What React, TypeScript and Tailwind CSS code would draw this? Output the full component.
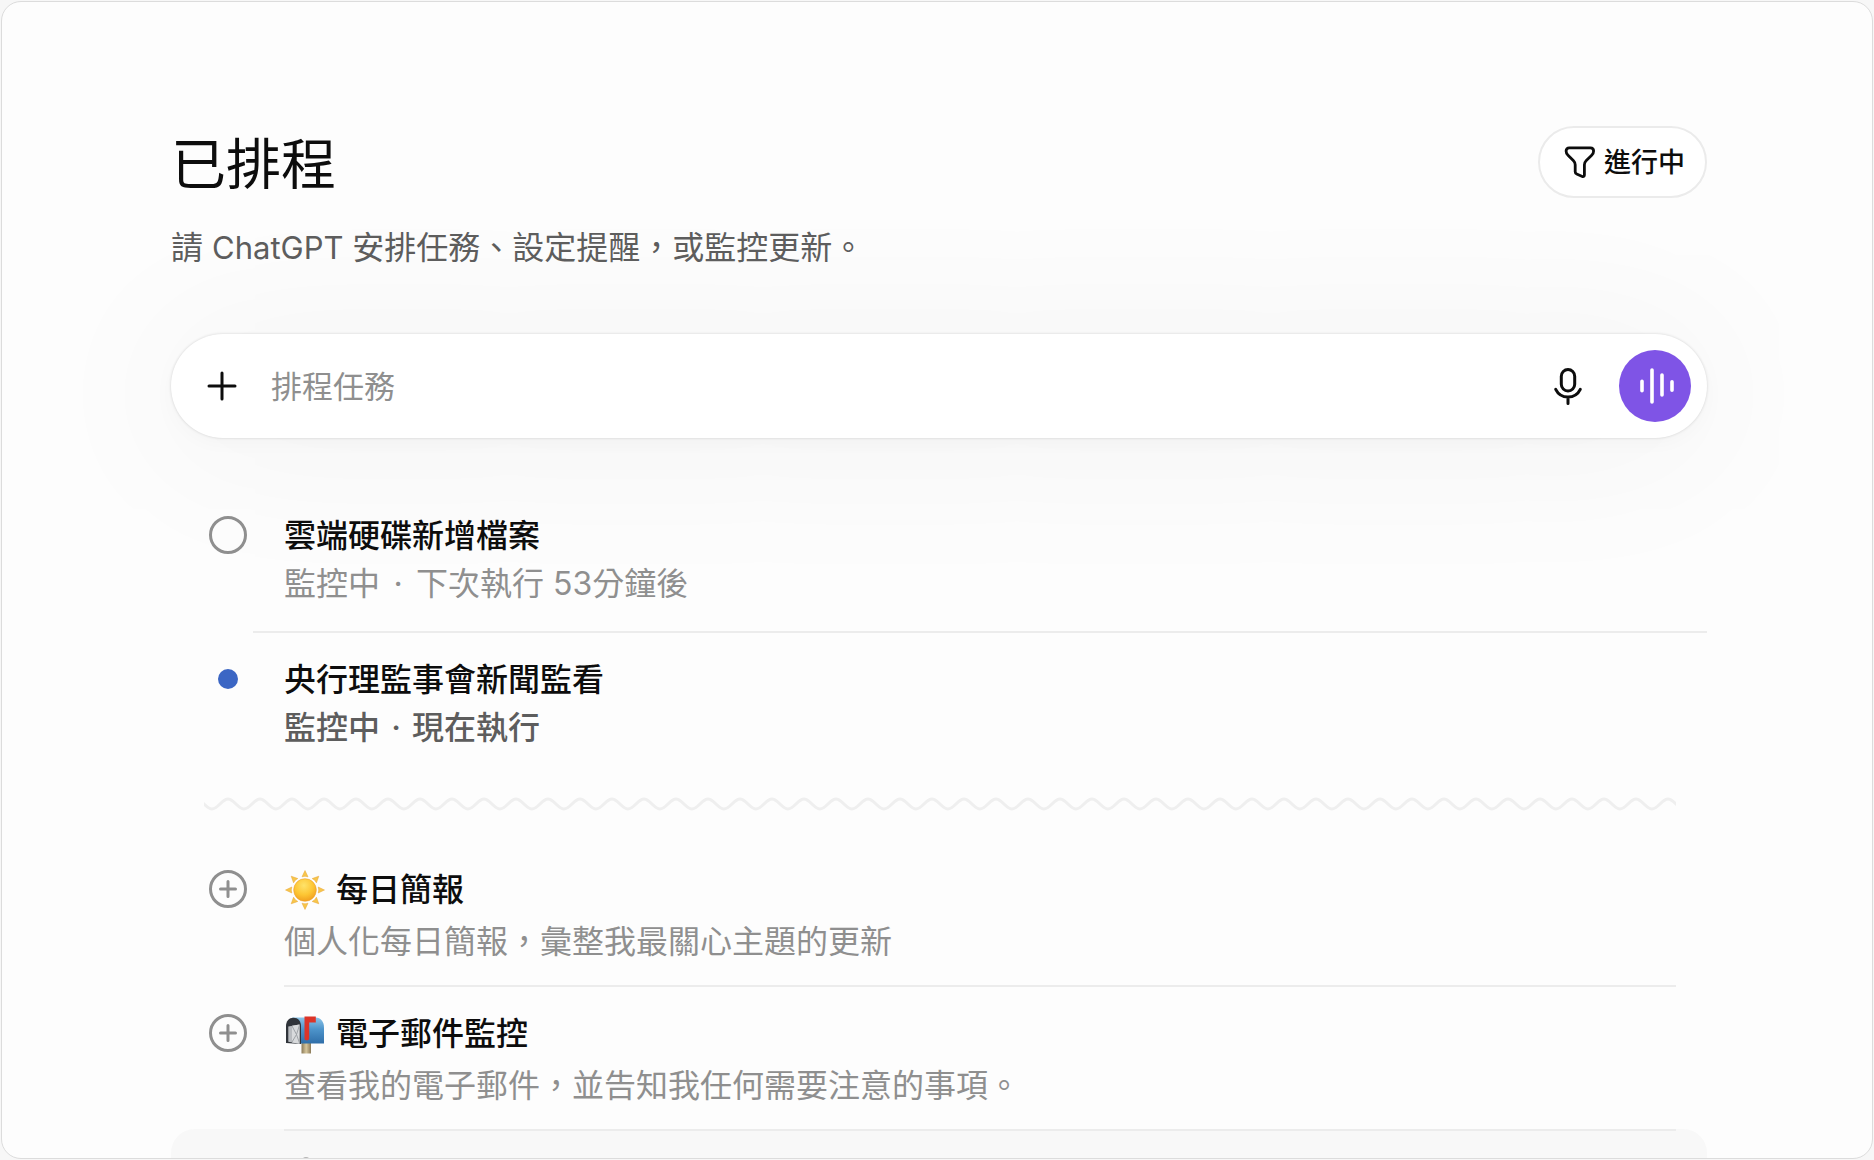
import { useState } from "react";
import type { ComponentType, ReactNode } from "react";

type Task = {
  id: string;
  title: string;
  status: string;
  next: string;
  running: boolean;
};

type Suggestion = {
  id: string;
  title: string;
  description: string;
  icon: ComponentType;
  active?: boolean;
};

const TASKS: Task[] = [
  { id: "drive", title: "雲端硬碟新增檔案", status: "監控中", next: "下次執行 53分鐘後", running: false },
  { id: "bank",  title: "央行理監事會新聞監看", status: "監控中", next: "現在執行", running: true },
];

const SUGGESTIONS: Suggestion[] = [
  { id: "brief", title: "每日簡報", description: "個人化每日簡報，彙整我最關心主題的更新", icon: SunIcon },
  { id: "mail",  title: "電子郵件監控", description: "查看我的電子郵件，並告知我任何需要注意的事項。", icon: MailboxIcon },
  { id: "more",  title: "", description: "", icon: BellIcon, active: true },
];

export default function App() {
  const [draft, setDraft] = useState("");

  return (
    <div className="h-screen bg-[#f7f7f7] p-px">
      <div className="h-full overflow-hidden rounded-[20px] border border-[#dcdcdc] bg-[#fdfdfd] pl-[169px] pr-[165px] pt-[124px] font-['Inter','Noto_Sans_CJK_TC',sans-serif] text-[32px] leading-[48px] text-[#0d0d0d]">

        {/* Header */}
        <header className="flex items-center justify-between">
          <h1 className="pt-1 text-[55px] font-normal leading-[68px]">已排程</h1>
          <button className="flex h-[72px] items-center gap-2 rounded-full border-2 border-[#ebebeb] bg-white pl-6 pr-5 text-[27px] font-medium leading-[48px]">
            <FilterIcon />
            <span className="pt-0.5">進行中</span>
          </button>
        </header>
        <p className="pt-[26px] text-[#5d5d5d]">
          請 <span className="text-[31px]">ChatGPT </span>安排任務、設定提醒，或監控更新。
        </p>

        {/* Composer */}
        <form
          onSubmit={(e) => e.preventDefault()}
          className="mt-[62px] flex items-center rounded-full bg-white p-4 shadow-[0_0_3px_rgba(0,0,0,0.16),0_8px_16px_rgba(0,0,0,0.02),0_8px_160px_24px_rgba(0,0,0,0.035)]"
        >
          <button type="button" aria-label="新增" className="flex size-[70px] items-center justify-center">
            <PlusIcon />
          </button>
          <input
            aria-label="排程任務"
            placeholder="排程任務"
            value={draft}
            onChange={(e) => setDraft(e.target.value)}
            className="ml-[14px] min-w-0 flex-1 bg-transparent pt-0.5 text-[31px] outline-none placeholder:text-[#8f8f8f]"
          />
          <button type="button" aria-label="聽寫" className="mr-4 flex size-[70px] items-center justify-center">
            <MicIcon />
          </button>
          <button type="button" aria-label="語音" className="flex size-[72px] items-center justify-center rounded-full bg-[#7f54e6]">
            <VoiceIcon />
          </button>
        </form>

        {/* Scheduled tasks */}
        <ul className="mt-[49px]">
          {TASKS.map((task, i) => (
            <li key={task.id}>
              <hr className={i === 0 ? "h-0.5 border-0" : "ml-[82px] h-0.5 border-0 bg-[#ececec]"} />
              <Row marker={task.running ? <RunningDot /> : <IdleRing />}>
                <h2 className="font-medium">{task.title}</h2>
                <p className={task.running ? "flex font-medium text-[#5d5d5d]" : "flex text-[#8f8f8f]"}>
                  {task.status}
                  <span className={task.running ? "w-8 text-center" : "w-9 text-center"}>·</span>
                  {task.next}
                </p>
              </Row>
            </li>
          ))}
        </ul>

        <Wave />

        {/* Suggestions */}
        <ul className="mt-[29px]">
          {SUGGESTIONS.map((s, i) => (
            <li key={s.id} className={s.active ? "rounded-3xl bg-[#f8f8f8] text-[#5d5d5d]" : "text-[#8f8f8f]"}>
              <hr className={i === 0 ? "h-0.5 border-0" : "ml-[113px] mr-[31px] h-0.5 border-0 bg-[#ececec]"} />
              <Row marker={<AddIcon />}>
                <h2 className="flex items-center gap-[10px] font-medium text-[#0d0d0d]">
                  <s.icon />
                  {s.title}
                </h2>
                <p className="mt-1 -mb-1">{s.description}</p>
              </Row>
            </li>
          ))}
        </ul>
      </div>
    </div>
  );
}

function Row({ marker, children }: { marker: ReactNode; children: ReactNode }) {
  return (
    <div className="flex pb-[23px] pt-[22px]">
      <div className="flex h-12 w-[113px] shrink-0 items-center justify-center">{marker}</div>
      <div className="min-w-0 flex-1 pt-px">{children}</div>
    </div>
  );
}

// ─── Markers ─────────────────────────────────────────────────────────────────

function IdleRing() {
  return <span className="size-[38px] rounded-full border-3 border-[#8f8f8f]" />;
}

function RunningDot() {
  return <span className="size-5 rounded-full bg-[#3b66c4]" />;
}

function AddIcon() {
  return (
    <svg width="38" height="38" viewBox="0 0 38 38" fill="none" stroke="currentColor" strokeWidth="3" strokeLinecap="round">
      <circle cx="19" cy="19" r="17.5" />
      <path d="M19 11.5v15M11.5 19h15" />
    </svg>
  );
}

// ─── Icons ───────────────────────────────────────────────────────────────────

function FilterIcon() {
  return (
    <svg width="32" height="34" viewBox="0 0 32 34" fill="none" stroke="currentColor" strokeWidth="2.8" strokeLinejoin="round">
      <path d="M5.2 2.8h21.2c2 0 3.2 1.3 3.2 3.1 0 1.8-.6 3.1-1.9 4.3l-5.4 5.2c-1.3 1.3-1.9 2.6-1.9 4.4v10.2c0 1.4-.9 2-2.1 1.5l-5.6-2.5c-1-.4-1.5-1.1-1.5-2.2v-7c0-1.8-.6-3.1-1.9-4.4l-5.3-5.2C2.700 9 2.1 7.7 2.1 5.9c0-1.800 1.2-3.1 3.1-3.1Z" />
    </svg>
  );
}

function PlusIcon() {
  return (
    <svg width="30" height="30" viewBox="0 0 30 30" fill="none" stroke="currentColor" strokeWidth="3" strokeLinecap="round">
      <path d="M15 2v26M2 15h26" />
    </svg>
  );
}

function MicIcon() {
  return (
    <svg width="30" height="38" viewBox="0 0 30 38" fill="none" stroke="currentColor" strokeWidth="3" strokeLinecap="round">
      <rect x="8.3" y="2.500" width="13.4" height="21.5" rx="6.7" />
      <path d="M2.7 22.4a13.7 13.7 0 0 0 24.6 0M15 30.5v6" />
    </svg>
  );
}

function VoiceIcon() {
  return (
    <svg width="38" height="38" viewBox="0 0 38 38" fill="none" stroke="#fff" strokeWidth="3.6" strokeLinecap="round">
      <path d="M6 14.2v9.6M16 3v32M26 8v20M36 14.7v8.6" />
    </svg>
  );
}

function Wave() {
  return (
    <svg className="ml-[33px] mt-[21px] h-4 w-[1472px] max-w-full" fill="none" aria-hidden="true">
      <defs>
        <pattern id="wave" width="32" height="16" patternUnits="userSpaceOnUse">
          <path d="M-8 3C-2 3 2 13 8 13S18 3 24 3s10 10 16 10" stroke="#efefef" strokeWidth="3" />
        </pattern>
      </defs>
      <rect width="100%" height="16" fill="url(#wave)" />
    </svg>
  );
}

function SunIcon() {
  const rays = [0, 45, 90, 135, 180, 225, 270, 315];
  return (
    <svg width="42" height="42" viewBox="0 0 42 42" aria-hidden="true">
      <defs>
        <radialGradient id="sun" cx="0.45" cy="0.3" r="0.75">
          <stop offset="0" stopColor="#ffe36a" />
          <stop offset="0.55" stopColor="#fdc634" />
          <stop offset="1" stopColor="#f09a1c" />
        </radialGradient>
      </defs>
      {rays.map((deg) => (
        <path key={deg} d="M21 1.5l3 6.3q-3-1.1-6 0z" fill="#f7c64b" stroke="#e9a535" strokeWidth="0.5" transform={`rotate(${deg} 21 21)`} />
      ))}
      <circle cx="21" cy="21" r="11.3" fill="url(#sun)" stroke="#eda02a" strokeWidth="0.6" />
    </svg>
  );
}

function MailboxIcon() {
  return (
    <svg width="42" height="42" viewBox="0 0 42 42" aria-hidden="true">
      <defs>
        <linearGradient id="box" x1="0" y1="0" x2="0" y2="1">
          <stop offset="0" stopColor="#8cc4e8" />
          <stop offset="0.45" stopColor="#4d94cb" />
          <stop offset="1" stopColor="#2f6ea8" />
        </linearGradient>
        <linearGradient id="post" x1="0" y1="0" x2="1" y2="0">
          <stop offset="0" stopColor="#8b7a58" />
          <stop offset="0.5" stopColor="#d6c69c" />
          <stop offset="1" stopColor="#8b7a58" />
        </linearGradient>
      </defs>
      <path d="M17.5 28h9.5v12.5h-9.5z" fill="url(#post)" />
      <path d="M8 4.5h23.5C37 4.5 40 9 40 14.5v16H16z" fill="url(#box)" />
      <path d="M2 30V13C2 8 5 4.7 9.5 4.7S17 8 17 13v18z" fill="#30343a" />
      <path d="M4.3 28.8V13.5l11.2-2v19.3z" fill="#b9bcc0" />
      <path d="M8 12.8l7.5-1.3v19.3L8 29.5z" fill="#d8dadc" />
      <path d="M8 13l4.5 8.5L8 29M15.5 12l-3 9.5 3 8.5" fill="none" stroke="#999da2" strokeWidth="0.9" />
      <path d="M20.5 3.6h11.3v5.8h-6.600v16c0 1-.8 1.9-2.3 1.9s-2.4-.9-2.4-1.9z" fill="#dc3428" />
    </svg>
  );
}

function BellIcon() {
  return (
    <svg width="42" height="42" viewBox="0 0 42 42" aria-hidden="true">
      <circle cx="22" cy="8" r="5" fill="#b5b5b5" />
      <path d="M7 33c4-5 4-9 4-15 0-7 5-12 11-12s11 5 11 12c0 6 0 10 4 15z" fill="#e5b84a" />
    </svg>
  );
}
